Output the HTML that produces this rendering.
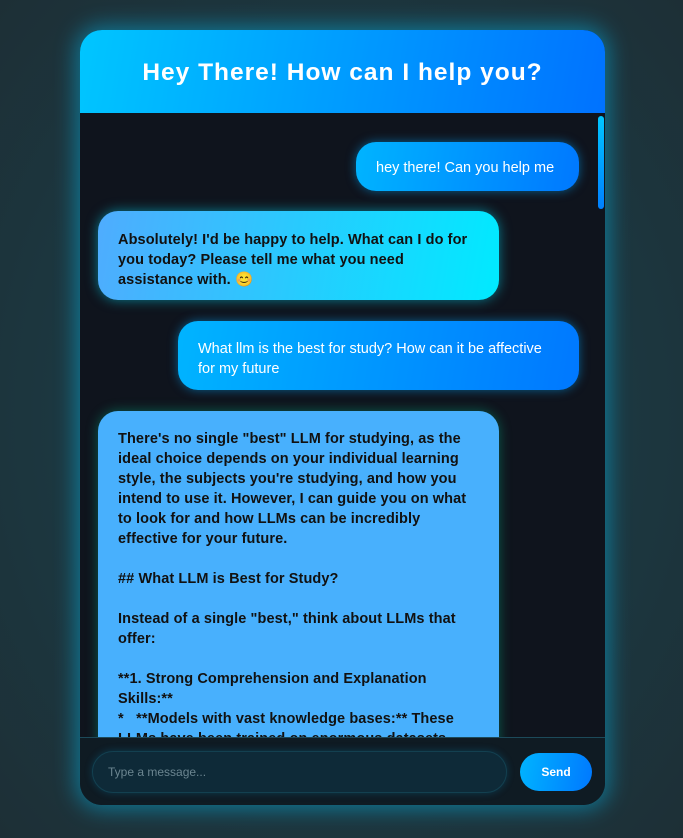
<!DOCTYPE html>
<html><head><meta charset="utf-8"><style>
*{margin:0;padding:0;box-sizing:border-box}
html,body{width:683px;height:838px;overflow:hidden}
body{background:radial-gradient(ellipse at 50% 50%,#1d4a58 0%,#1c3942 50%,#1d2f36 100%);font-family:"Liberation Sans",sans-serif;position:relative}
.box{position:absolute;left:80px;top:30px;width:525px;height:775px;border-radius:22px;overflow:hidden;background:#0f141d;box-shadow:0 0 22px 4px rgba(0,200,255,0.45)}
.hd{position:absolute;left:0;top:0;width:525px;height:83px;background:linear-gradient(100deg,#00c6ff,#0072ff);color:#fff;font-weight:bold;font-size:24.5px;text-align:center;line-height:86px;letter-spacing:1px}
.msgs{position:absolute;left:0;top:83px;width:525px;height:624px;overflow:hidden}
.b{position:absolute;border-radius:20px;font-size:14.5px;line-height:20px;white-space:nowrap}
.u{color:#fff;background:linear-gradient(100deg,#00b4ff,#0078ff);box-shadow:0 0 10px rgba(0,170,255,0.5)}
.a{color:#111;font-weight:bold;font-size:14.5px;letter-spacing:0.1px}
.sb{position:absolute;left:518px;top:3px;width:6px;height:93px;border-radius:3px;background:linear-gradient(#00c6ff,#0080ff)}
.ft{position:absolute;left:0;top:707px;width:525px;height:68px;background:#0f1b23;border-top:1px solid #1c4a5a}
.in{position:absolute;left:12px;top:13px;width:415px;height:42px;border-radius:21px;background:#0e2a38;border:1px solid #134050;box-shadow:0 0 8px rgba(0,160,220,0.25);color:#6b8590;font-size:12px;line-height:40px;padding-left:15px}
.sd{position:absolute;left:440px;top:15px;width:72px;height:38px;border-radius:19px;background:linear-gradient(100deg,#00b4ff,#0078ff);color:#fff;font-weight:bold;font-size:12px;text-align:center;line-height:38px}
</style></head><body>
<div class="box">
<div class="hd">Hey There! How can I help you?</div>
<div class="msgs">
<div class="b u" style="left:276px;top:29px;width:223px;height:49px;padding:16px 0 0 20px">hey there! Can you help me</div>
<div class="b a" style="left:18px;top:98px;width:401px;height:89px;padding:19px 20px;background:linear-gradient(100deg,#4facfe,#00eaff);box-shadow:0 0 12px rgba(0,230,255,0.5)">Absolutely! I'd be happy to help. What can I do for<br>you today? Please tell me what you need<br>assistance with. 😊</div>
<div class="b u" style="left:98px;top:208px;width:401px;height:69px;padding:18px 20px">What llm is the best for study? How can it be affective<br>for my future</div>
<div class="b a" style="left:18px;top:298px;width:401px;height:400px;padding:18px 20px;background:#48b0fd;box-shadow:0 0 12px rgba(0,200,150,0.4)">There's no single "best" LLM for studying, as the<br>ideal choice depends on your individual learning<br>style, the subjects you're studying, and how you<br>intend to use it. However, I can guide you on what<br>to look for and how LLMs can be incredibly<br>effective for your future.<br><br>## What LLM is Best for Study?<br><br>Instead of a single "best," think about LLMs that<br>offer:<br><br>**1. Strong Comprehension and Explanation<br>Skills:**<br>*&nbsp;&nbsp;&nbsp;**Models with vast knowledge bases:** These<br>LLMs have been trained on enormous datasets</div>
<div class="sb"></div>
</div>
<div class="ft"><div class="in">Type a message...</div><div class="sd">Send</div></div>
</div>
</body></html>
